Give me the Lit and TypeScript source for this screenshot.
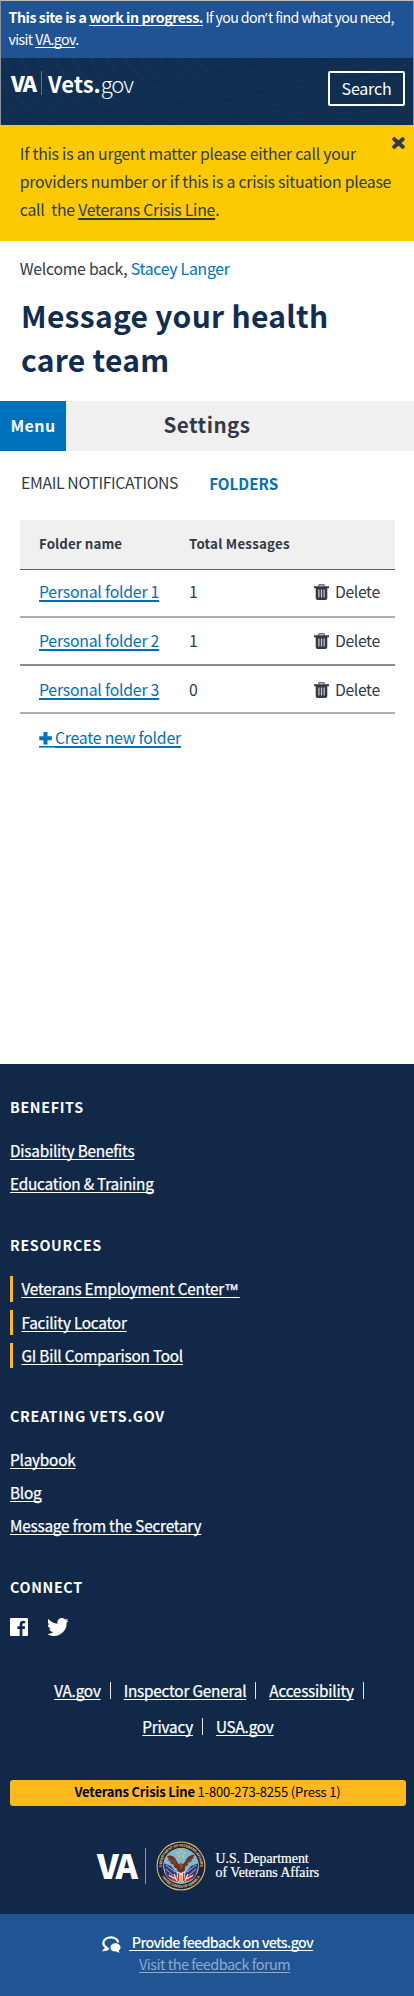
import { LitElement, html, css, svg } from 'lit';
import { customElement } from 'lit/decorators.js';

const folders = [
  { name: 'Personal folder 1', total: 1 },
  { name: 'Personal folder 2', total: 1 },
  { name: 'Personal folder 3', total: 0 },
];

const trash = svg`<svg class="trash" width="15" height="16" viewBox="0 0 15 16">
  <path d="M4.4 2.600 5.200.8h4.600l.8 1.800" fill="none" stroke="#6b727b" stroke-width="1.400"/>
  <path d="M0 2.300h15v2H0zM1.700 4h11.600v10q0 2-2 2H3.700q-2 0-2-2z" fill="#323a45"/>
  <path d="M4.900 5.600v7.800M7.500 5.600v7.800M10.100 5.600v7.800" stroke="#c9ccd0" stroke-width="1.200"/></svg>`;

const seal = svg`<svg class="seal" width="50" height="50" viewBox="-25 -25 50 50">
  <defs>
    <path id="top" d="M-18.6 5A19.3 19.3 0 1 1 18.6 5"/>
    <path id="bottom" d="M-20 8.6A21.8 21.8 0 0 0 20 8.6"/>
    <clipPath id="disc"><circle r="17.4"/></clipPath>
  </defs>
  <circle r="24.5" fill="#d9bd5c"/><circle r="23.4" fill="#1d2145"/>
  <circle r="17.9" fill="#d9bd5c"/><circle r="17.4" fill="#80b6d6"/>
  <g class="ring">
    <text><textPath href="#top" startOffset="50%" text-anchor="middle" textLength="62">DEPARTMENT OF VETERANS AFFAIRS</textPath></text>
    <text><textPath href="#bottom" startOffset="50%" text-anchor="middle" textLength="46">UNITED STATES OF AMERICA</textPath></text>
  </g>
  <g clip-path="url(#disc)">
    <path d="M-18-3-10 0-4 8-6 15-14 12z" fill="#2c3c78"/><path d="M18-3 10 0 4 8 6 15 14 12z" fill="#2c3c78"/>
    <path d="M-15 3-5 12M-15-1-6 6M15 3 5 12M15-1 6 6" stroke="#c3cfe0" stroke-width=".8"/>
    <path d="M-14 8-5 9-2 16-8 15z" fill="#b53a45"/><path d="M14 8 5 9 2 16 8 15z" fill="#b53a45"/>
    <path d="M-12 9.5-5 13M12 9.5 5 13M-7 8l3 7M7 8l-3 7" stroke="#f0e8e8" stroke-width="1.1"/>
    <path d="M-1-1C-4-3-5-7-7-9-10-11-13-11-14-9l2 2-1 1 3 2-1 1 4 2 0 2 3 2 0 3L0 9l4-5 0-3 3-2 0-2 4-2-1-1 3-2-1-1 2-2C13-12 10-11 7-9 5-7 4-3 1-1z" fill="#64351f"/>
    <path d="M-12-8-5-4M-11-6-4-1M12-8 5-4M11-6 4-1" stroke="#9a5a32" stroke-width=".7"/>
    <path d="M-1.8-1.5 0-3.5 2-1.5 1.5 2-1 3z" fill="#8b4c29"/>
    <path d="M-4 5 0 7 4 5 3 16H-3z" fill="#e8dcda"/><path d="M-2.4 7v8M2.6 7v8" stroke="#b8343e" stroke-width="1.2"/>
    <path d="M-1 9 1 9 2 16-2 16z" fill="#e3ad38"/>
  </g>
  <g fill="#e8d04c"><circle cy="-14.8" r="1"/><circle cx="-3.3" cy="-13" r="1"/><circle cx="3.3" cy="-13" r="1"/><circle cx="-2" cy="-9.8" r="1"/><circle cx="2" cy="-9.8" r="1"/></g>
</svg>`;

@customElement('app-root')
export class AppRoot extends LitElement {
  static styles = css`
    :host {
      display: block;
      width: 414px;
      height: 1996px;
      overflow: hidden;
      background: #fff;
      color: #323a45;
      font: 15.8px/28px 'Noto Sans CJK SC', 'Noto Sans', sans-serif;
      letter-spacing: -0.26px;
    }
    * { box-sizing: border-box; }
    h1, h2, h3, p { margin: 0; }
    svg { display: block; flex: none; }
    a { color: inherit; text-decoration: underline; text-decoration-thickness: 1px; text-underline-offset: 2px; text-decoration-skip-ink: none; white-space: nowrap; }
    .frame { border: 1px solid #8a93a0; border-top-color: #c0c0b8; border-bottom: 0; height: 125px; }
    .notice { background: #1f5394; color: #fff; height: 57px; padding: 6.2px 0 0 7.5px; font-size: 14.2px; line-height: 21.6px; letter-spacing: -0.62px; white-space: nowrap; }
    .notice b { letter-spacing: -0.43px; }
    .apos { font-family: 'Open Sans', sans-serif; letter-spacing: 0.5px; }
    .top {
      height: 67px; display: flex; justify-content: space-between; color: #fff; padding: 0 8px 0 10px;
      background:
        repeating-radial-gradient(ellipse 190px 70px at 78% -18%, transparent 0 5%, #113156 6% 7%, transparent 8% 9%),
        #112e51;
    }
    .brand { display: flex; height: 24px; margin-top: 13px; font-size: 22px; line-height: 24px; }
    .brand .va { font-weight: 900; letter-spacing: -1.6px; width: 30px; font-size: 21.5px; }
    .brand .bar { width: 1px; background: #5d7390; margin-right: 6px; }
    .brand .vets { font-weight: 700; letter-spacing: 0; }
    .brand .gov { font-weight: 300; letter-spacing: -1.1px; }
    .search { width: 77px; height: 35px; margin-top: 13px; border: 2px solid #fff; border-radius: 2px; font-size: 16px; line-height: 31px; text-align: center; letter-spacing: -0.2px; }
    .alert { background: #fbca05; height: 116px; padding: 14.5px 0 0 19.8px; position: relative; white-space: pre; letter-spacing: -0.23px; font-size: 15.8px; color: #2c3a45; }
    .alert a { text-decoration-thickness: 2px; }
    .close { position: absolute; right: 9px; top: 12px; }
    .welcome { margin: 14px 0 0 19.7px; white-space: nowrap; color: #323a45; line-height: 28px; height: 28px; }
    .welcome span { color: #0071bc; }
    h1 { margin: 10px 0 0 21px; font-size: 30px; line-height: 44px; letter-spacing: 0.29px; color: #112e51; height: 88px; }
    .bar2 { margin-top: 20px; height: 50px; display: grid; grid-template-columns: 66px 1fr 66px; background: #f0f0f0; text-align: center; font-weight: 700; line-height: 50px; }
    .menu { background: #0071bc; color: #fff; font-size: 16px; letter-spacing: 0.4px; line-height: 49px; }
    h2 { font-size: 20.6px; line-height: 47.5px; letter-spacing: 0.45px; }
    .tabs { display: flex; gap: 31px; padding-left: 21px; height: 69px; padding-top: 18px; white-space: nowrap; letter-spacing: -0.36px; }
    .tabs b { color: #0071bc; font-size: 15.2px; letter-spacing: 0; }
    .table { width: 375px; margin-left: 20px; }
    .row { display: grid; grid-template-columns: 169px 125px 1fr; height: 48px; line-height: 42px; border-bottom: 2px solid #aeb0b5; padding-top: 1px; }
    .row > :first-child { padding-left: 19px; }
    .row:nth-child(3) { border-color: #848b96; padding-top: 2px; }
    .row:nth-child(4) { padding-top: 3px; }
    .row.head { background: #f0f0f0; height: 50px; border-bottom: 1px solid #5b616b; font-size: 13.3px; font-weight: 700; line-height: 47px; letter-spacing: 0.1px; padding-top: 0; }
    .head span:nth-child(2) { letter-spacing: 0.22px; }
    .link { color: #0071bc; letter-spacing: -0.22px; }
    .link a { text-decoration-thickness: 1.6px; }
    .del { display: flex; align-items: center; gap: 6px; letter-spacing: -0.4px; height: 42px; }
    .create { margin: 10px 0 0 39px; height: 28px; }
    .create svg { display: inline; vertical-align: -4px; }

    footer { margin-top: 312px; height: 850px; background: #112849; color: #fff; padding: 30px 9px 0 10px; letter-spacing: -0.2px; }
    h3 { font-size: 14.3px; line-height: 25px; letter-spacing: 0.66px; }
    .list { display: flex; flex-direction: column; font-size: 15.3px; line-height: 33px; -webkit-text-stroke: 0.25px #fff; padding-top: 15.3px; margin-bottom: 31.4px; }
    .list.tools { gap: 8px; line-height: 25px; padding-top: 19.2px; margin-bottom: 35px; }
    .tools div { border-left: 3px solid #fdb81e; padding-left: 8.5px; }
    .tm { font-family: 'Liberation Sans', sans-serif; letter-spacing: 0.4px; }
    .social { display: flex; gap: 20px; padding-top: 19.7px; height: 38px; }
    .legal { display: flex; flex-wrap: wrap; justify-content: center; width: 335px; margin: 35.7px auto 0 38px; line-height: 36px; height: 72px; font-size: 15.3px; -webkit-text-stroke: 0.25px #fff; }
    .legal div { display: flex; align-items: center; margin-right: 13px; }
    .legal div:last-child { margin-right: 15px; }
    .legal i { width: 1px; height: 17px; background: #e4e8ee; margin-left: 9px; }
    .crisis { margin: 35.3px -0.5px 0 -0.5px; height: 26px; background: #fdb81e; border-radius: 3px; color: #000; text-align: center; font-size: 13px; line-height: 23.5px; letter-spacing: -0.18px; }
    .dept { display: flex; align-items: center; margin: 35.700px 0 0 87px; height: 50px; }
    .dept .va { font: 900 34px/36px 'Noto Sans CJK SC', sans-serif; letter-spacing: -2.6px; width: 48px; margin-top: -3px; }
    .dept .rule { width: 1px; height: 36px; background: #8e9aab; margin-right: 10px; }
    .dept p { font: 13.8px/14px 'Liberation Serif', serif; letter-spacing: 0; margin: -1px 0 0 9.5px; white-space: nowrap; -webkit-text-stroke: 0.2px #fff; }
    .ring { fill: #e9d27a; font: 700 3.6px 'Liberation Sans', sans-serif; letter-spacing: 0; }
    .feedback { background: #205493; height: 82px; color: #fff; padding: 17px 0 0 102px; letter-spacing: -0.2px; }
    .feedback .one { display: flex; gap: 8px; line-height: 22px; font-size: 14.3px; font-weight: 500; letter-spacing: -0.68px; }
    .one a { white-space: pre; word-spacing: 0.3px; }
    .feedback svg { margin-top: 4.5px; }
    .feedback .two { color: #8ea9cb; font-size: 14.5px; line-height: 22px; padding-left: 37px; letter-spacing: -0.52px; }
  `;

  render() {
    return html`
      <div class="frame">
        <div class="notice"><b>This site is a <a>work in progress.</a></b> If you don<span class="apos">’</span>t find what you need,<br />visit <a>VA.gov</a>.</div>
        <div class="top">
          <div class="brand"><span class="va">VA</span><span class="bar"></span><span class="vets">Vets.</span><span class="gov">gov</span></div>
          <div class="search">Search</div>
        </div>
      </div>
      <div class="alert"><div>If this is an urgent matter please either call your</div><div>providers number or if this is a crisis situation please</div><div>call  the <a>Veterans Crisis Line</a>.</div><svg class="close" width="13" height="12" viewBox="0 0 13 12"><path d="M2.3 2.2 10.7 9.8M10.7 2.2 2.3 9.8" stroke="#323a45" stroke-width="4" stroke-linecap="round"/></svg></div>
      <div class="welcome">Welcome back, <span>Stacey Langer</span></div>
      <h1>Message your health<br />care team</h1>
      <div class="bar2"><span class="menu">Menu</span><h2>Settings</h2></div>
      <div class="tabs"><span>EMAIL NOTIFICATIONS</span><b>FOLDERS</b></div>
      <div class="table">
        <div class="row head"><span>Folder name</span><span>Total Messages</span></div>
        ${folders.map((f) => html`<div class="row"><span class="link"><a>${f.name}</a></span><span>${f.total}</span><span class="del">${trash}Delete</span></div>`)}
      </div>
      <div class="create link"><a><svg width="16" height="16" viewBox="0 0 16 16"><path d="M6.500 0v12.600M.3 6.300h12.500" stroke="#0071bc" stroke-width="4"/><path d="M0 14h16v1.600H0z" fill="#0071bc"/></svg>Create new folder</a></div>
      <footer>
        <h3>BENEFITS</h3>
        <div class="list"><div><a>Disability Benefits</a></div><div><a>Education &amp; Training</a></div></div>
        <h3>RESOURCES</h3>
        <div class="list tools"><div><a>Veterans Employment Center<span class="tm">™</span></a></div><div><a>Facility Locator</a></div><div><a>GI Bill Comparison Tool</a></div></div>
        <h3>CREATING VETS.GOV</h3>
        <div class="list"><div><a>Playbook</a></div><div><a>Blog</a></div><div><a>Message from the Secretary</a></div></div>
        <h3>CONNECT</h3>
        <div class="social">
          <svg width="18" height="18" viewBox="0 0 18 18"><path fill="#fff" d="M1 0h16q1 0 1 1v16q0 1-1 1h-4.6v-7h2.3l.4-2.7h-2.7V6.6q0-1.3 1.4-1.3h1.4V2.9q-4.9-.7-5.5 2.6v2.8H7.4V11h2.3v7H1q-1 0-1-1V1q0-1 1-1z"/></svg>
          <svg width="20" height="18" viewBox="1 3 22 19"><path fill="#fff" d="M23.6 5c-.9.4-1.800.6-2.800.8 1-.6 1.800-1.600 2.200-2.700-1 .6-2 1-3.100 1.200A4.900 4.900 0 0 0 11.500 8.800C7.400 8.600 3.800 6.600 1.400 3.700c-1.300 2.200-.7 5.100 1.500 6.600-.8 0-1.600-.2-2.200-.6 0 2.300 1.600 4.400 3.900 4.900-.7.200-1.500.2-2.200.1.600 2 2.400 3.400 4.600 3.400A9.900 9.900 0 0 1 0 20.100 14 14 0 0 0 21.500 7.600c1-.700 1.600-1.600 2.100-2.600z"/></svg>
        </div>
        <div class="legal">
          <div><a>VA.gov</a><i></i></div><div><a>Inspector General</a><i></i></div><div><a>Accessibility</a><i></i></div>
          <div><a>Privacy</a><i></i></div><div><a>USA.gov</a></div>
        </div>
        <div class="crisis"><b>Veterans Crisis Line</b> 1-800-273-8255 (Press 1)</div>
        <div class="dept"><span class="va">VA</span><span class="rule"></span>${seal}<p>U.S. Department<br />of Veterans Affairs</p></div>
      </footer>
      <div class="feedback">
        <div class="one"><svg width="19" height="17" viewBox="0 0 19 17"><path d="M16.100 6.500C16 3.600 13 1.300 9 1.300S1.300 3.800 1.300 6.800c0 2 1.100 3.500 2.900 4.500-.2 1.100-.7 1.800-1.500 2.600 1.800-.2 3-.9 4-1.800" fill="none" stroke="#fff" stroke-width="2.200"/><path d="M13.300 7.300c3 0 5.200 1.700 5.200 4.100 0 1.300-.7 2.400-1.800 3.100.1.900.6 1.500 1.200 2.100-1.500 0-2.500-.5-3.300-1.200-3.700.5-6.100-1.300-6.100-4 0-2.400 2-4.100 4.800-4.100z" fill="#fff"/></svg><a> Provide feedback on vets.gov</a></div>
        <div class="two"><a>Visit the feedback forum</a></div>
      </div>
    `;
  }
}
